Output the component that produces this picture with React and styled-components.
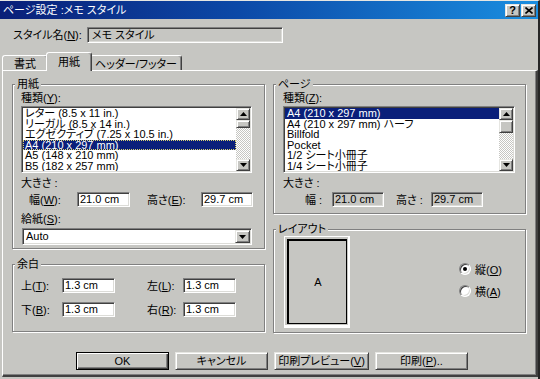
import React from 'react';
import styled, { createGlobalStyle, css } from 'styled-components';

const FACE = '#c6c6c2';

const GlobalStyle = createGlobalStyle`
  html, body { margin: 0; padding: 0; background: ${FACE}; }
  body {
    font-family: "Liberation Sans", "Noto Sans CJK JP", sans-serif;
    font-size: 11px;
    color: #000;
    font-feature-settings: "palt";
  }
  * { box-sizing: border-box; }
`;

const raised = css`
  border: 1px solid;
  border-color: #e6e6e2 #404040 #404040 #e6e6e2;
  box-shadow: inset 1px 1px 0 #fff, inset -1px -1px 0 #808080;
  background: ${FACE};
`;

const sunken = css`
  border: 1px solid;
  border-color: #808080 #fff #fff #808080;
  box-shadow: inset 1px 1px 0 #404040, inset -1px -1px 0 #dcdcd8;
`;

const Window = styled.div`
  width: 540px;
  height: 379px;
  background: ${FACE};
  border-top: 1px solid #e6e6e2;
  border-right: 2px solid #262626;
  padding-bottom: 2px;
  display: flex;
  flex-direction: column;
  overflow: hidden;
`;

const TitleBar = styled.div`
  height: 18px;
  flex: none;
  display: flex;
  align-items: center;
  padding: 0 2px 0 3px;
  background: linear-gradient(90deg, #0a1f78 0%, #0c4aa8 45%, #1a8ee0 100%);
  color: #fff;
  line-height: 18px;
  white-space: nowrap;
`;

const CaptionButtons = styled.div`
  margin-left: auto;
  display: flex;
  gap: 1px;
`;

const CaptionButton = styled.div`
  ${raised};
  width: 15px;
  height: 13px;
  display: flex;
  align-items: center;
  justify-content: center;
  font-weight: bold;
  font-size: 11px;
  line-height: 11px;
  color: #000;
`;

const StyleRow = styled.div`
  margin-top: 8px;
  height: 16px;
  flex: none;
  display: flex;
  align-items: center;
  padding-left: 13px;
`;

const Label = styled.div`
  width: ${(p) => (p.$w ? `${p.$w}px` : 'auto')};
  margin-left: ${(p) => p.$ml || 0}px;
  height: 14px;
  line-height: 14px;
  white-space: nowrap;
  flex: none;
`;

const U = styled.span`
  text-decoration: underline;
  text-underline-offset: 1px;
`;

const StyleInput = styled.div`
  ${sunken};
  width: 196px;
  height: 16px;
  background: ${FACE};
  padding-left: 4px;
  line-height: 14px;
  white-space: nowrap;
`;

const TabStrip = styled.div`
  margin-top: 9px;
  flex: none;
  display: flex;
  align-items: flex-end;
  padding-left: 2px;
  position: relative;
  z-index: 1;
`;

const Tab = styled.div`
  width: ${(p) => (p.$active ? p.$w + 4 : p.$w)}px;
  height: ${(p) => (p.$active ? 19 : 15)}px;
  margin: ${(p) => (p.$active ? '0 -2px -1px -2px' : '0')};
  position: relative;
  z-index: ${(p) => (p.$active ? 2 : 1)};
  background: ${FACE};
  border: 1px solid;
  border-bottom: none;
  border-color: #fff #404040 transparent #fff;
  border-radius: 3px 3px 0 0;
  box-shadow: inset -1px 0 0 #808080;
  display: flex;
  align-items: center;
  justify-content: center;
  padding-bottom: ${(p) => (p.$active ? 2 : 0)}px;
  white-space: nowrap;
`;

const Panel = styled.div`
  flex: 1;
  margin-left: 2px;
  border-style: solid;
  border-width: 1px 2px 2px 1px;
  border-color: #fff #404040 #404040 #fff;
  box-shadow: inset -1px -1px 0 #808080;
  padding: 13px 0 0 9px;
  display: flex;
  flex-direction: column;
`;

const Columns = styled.div`
  display: flex;
  gap: 8px;
  align-items: flex-start;
`;

const Column = styled.div`
  width: 253px;
  display: flex;
  flex-direction: column;
  gap: 15px;
`;

const Group = styled.div`
  position: relative;
  border: 1px solid #808080;
  box-shadow: inset 1px 1px 0 #fff, 1px 1px 0 #fff;
  padding: ${(p) => p.$pad};
  height: ${(p) => (p.$h ? `${p.$h}px` : 'auto')};
  display: flex;
  flex-direction: ${(p) => (p.$row ? 'row' : 'column')};
  align-items: flex-start;
`;

const Legend = styled.div`
  position: absolute;
  top: -8px;
  left: 2px;
  padding: 0 2px;
  background: ${FACE};
  line-height: 14px;
  white-space: nowrap;
`;

const ListBox = styled.div`
  ${sunken};
  width: ${(p) => p.$w}px;
  height: 67px;
  margin-top: 1px;
  background: #fff;
  padding: 1px;
  display: flex;
`;

const Items = styled.div`
  flex: 1;
  overflow: hidden;
  display: flex;
  flex-direction: column;
`;

const Item = styled.div`
  height: 10.5px;
  line-height: 10.5px;
  padding-left: 2px;
  white-space: nowrap;
  flex: none;
  background: ${(p) => (p.$selected ? '#0a1f7a' : 'transparent')};
  color: ${(p) => (p.$selected ? '#fff' : '#000')};
  outline: ${(p) => (p.$focus ? '1px dotted #d8d070' : 'none')};
  outline-offset: -1px;
`;

const ScrollBar = styled.div`
  width: 14px;
  flex: none;
  display: flex;
  flex-direction: column;
`;

const ScrollButton = styled.div`
  ${raised};
  height: ${(p) => p.$h}px;
  flex: none;
  display: flex;
  align-items: center;
  justify-content: center;
`;

const Track = styled.div`
  flex: 1;
  background: repeating-conic-gradient(#ffffff 0 25%, ${FACE} 0 50%) 0 0 / 2px 2px;
`;

const SectionLabel = styled(Label)`
  margin-top: ${(p) => p.$mt || 0}px;
`;

const FieldRow = styled.div`
  margin-top: ${(p) => p.$mt || 0}px;
  margin-left: ${(p) => p.$ml || 0}px;
  height: 15px;
  display: flex;
  align-items: center;
`;

const TextBox = styled.div`
  ${sunken};
  width: ${(p) => p.$w}px;
  height: 15px;
  flex: none;
  background: ${(p) => (p.$disabled ? FACE : '#fff')};
  padding-left: 2px;
  line-height: 13px;
  white-space: nowrap;
`;

const ComboBox = styled.div`
  ${sunken};
  width: 230px;
  height: 17px;
  margin-top: 2px;
  margin-left: 1px;
  background: #fff;
  padding: 1px;
  display: flex;
  align-items: center;
`;

const ComboText = styled.div`
  flex: 1;
  padding-left: 2px;
  line-height: 13px;
`;

const ComboArrow = styled.div`
  ${raised};
  width: 15px;
  height: 13px;
  display: flex;
  align-items: center;
  justify-content: center;
`;

const MarginGrid = styled.div`
  display: grid;
  grid-template-columns: 41px 53px 32px 36px 53px;
  row-gap: 9px;
  align-items: center;
`;

const PageFrame = styled.div`
  width: 66px;
  height: 92px;
  flex: none;
  border: 1px solid #fff;
  border-bottom-width: 3px;
  border-right-width: 2px;
  padding: 2px 1px 1px 2px;
  display: flex;
`;

const Sheet = styled.div`
  flex: 1;
  border: 1px solid #000;
  box-shadow: inset 1px 1px 0 #000;
  display: flex;
  align-items: center;
  justify-content: center;
  padding-left: 2px;
`;

const RadioGroup = styled.div`
  margin-left: 109px;
  margin-top: 26px;
  display: flex;
  flex-direction: column;
  gap: 8px;
`;

const RadioRow = styled.div`
  display: flex;
  align-items: center;
  height: 14px;
  gap: 4px;
  white-space: nowrap;
`;

const RadioCircle = styled.div`
  width: 12px;
  height: 12px;
  border-radius: 50%;
  border: 1px solid;
  border-color: #808080 #fff #fff #808080;
  box-shadow: inset 1px 1px 0 #404040, inset -1px -1px 0 #dcdcd8;
  background: #fff;
  display: flex;
  align-items: center;
  justify-content: center;
  &::after {
    content: '';
    width: 4px;
    height: 4px;
    border-radius: 50%;
    background: ${(p) => (p.$checked ? '#000' : 'transparent')};
  }
`;

const ButtonRow = styled.div`
  margin-top: 19px;
  padding-left: 64px;
  display: flex;
  gap: 6px;
`;

const PushButton = styled.div`
  ${raised};
  width: ${(p) => p.$w}px;
  height: 18px;
  display: flex;
  align-items: center;
  justify-content: center;
  white-space: nowrap;
  line-height: 14px;
  ${(p) =>
    p.$default &&
    css`
      border-color: #000;
      box-shadow: inset 1px 1px 0 #fff, inset -1px -1px 0 #404040, inset -2px -2px 0 #808080;
    `}
`;

const Up = () => (
  <svg width="7" height="4" viewBox="0 0 7 4">
    <polygon points="3.5,0 7,4 0,4" fill="#000" />
  </svg>
);

const Down = () => (
  <svg width="7" height="4" viewBox="0 0 7 4">
    <polygon points="0,0 7,0 3.5,4" fill="#000" />
  </svg>
);

const CloseGlyph = () => (
  <svg width="8" height="7" viewBox="0 0 8 7">
    <path d="M0.5 0.5 L7.5 6.5 M7.5 0.5 L0.5 6.5" stroke="#000" strokeWidth="1.6" />
  </svg>
);

const Scroll = ({ thumb }) => (
  <ScrollBar>
    <ScrollButton $h={12}><Up /></ScrollButton>
    <ScrollButton $h={thumb} />
    <Track />
    <ScrollButton $h={12}><Down /></ScrollButton>
  </ScrollBar>
);

const paperItems = [
  'レター (8.5 x 11 in.)',
  'リーガル (8.5 x 14 in.)',
  'エグゼクティブ (7.25 x 10.5 in.)',
  'A4 (210 x 297 mm)',
  'A5 (148 x 210 mm)',
  'B5 (182 x 257 mm)',
];

const pageItems = [
  'A4 (210 x 297 mm)',
  'A4 (210 x 297 mm) ハーフ',
  'Billfold',
  'Pocket',
  '1/2 シート小冊子',
  '1/4 シート小冊子',
];

export default function App() {
  return (
    <>
      <GlobalStyle />
      <Window>
        <TitleBar>
          ページ設定 :メモ スタイル
          <CaptionButtons>
            <CaptionButton>?</CaptionButton>
            <CaptionButton><CloseGlyph /></CaptionButton>
          </CaptionButtons>
        </TitleBar>

        <StyleRow>
          <Label $w={74}>スタイル名(<U>N</U>):</Label>
          <StyleInput>メモ スタイル</StyleInput>
        </StyleRow>

        <TabStrip>
          <Tab $w={46}>書式</Tab>
          <Tab $w={42} $active>用紙</Tab>
          <Tab $w={92}>ヘッダー/フッター</Tab>
        </TabStrip>

        <Panel>
          <Columns>
            <Column>
              <Group $pad="6px 0 3px 8px">
                <Legend>用紙</Legend>
                <SectionLabel>種類(<U>Y</U>):</SectionLabel>
                <ListBox $w={231}>
                  <Items>
                    {paperItems.map((t, i) => (
                      <Item key={t} $selected={i === 3} $focus={i === 3}>{t}</Item>
                    ))}
                  </Items>
                  <Scroll thumb={8} />
                </ListBox>
                <SectionLabel $mt={3}>大きさ :</SectionLabel>
                <FieldRow $mt={2} $ml={8}>
                  <Label $w={48}>幅(<U>W</U>):</Label>
                  <TextBox $w={53}>21.0 cm</TextBox>
                  <Label $w={54} $ml={17}>高さ(<U>E</U>):</Label>
                  <TextBox $w={52}>29.7 cm</TextBox>
                </FieldRow>
                <SectionLabel $mt={5}>給紙(<U>S</U>):</SectionLabel>
                <ComboBox>
                  <ComboText>Auto</ComboText>
                  <ComboArrow><Down /></ComboArrow>
                </ComboBox>
              </Group>

              <Group $pad="13px 0 14px 8px">
                <Legend>余白</Legend>
                <MarginGrid>
                  <Label>上(<U>T</U>):</Label>
                  <TextBox $w={53}>1.3 cm</TextBox>
                  <span />
                  <Label>左(<U>L</U>):</Label>
                  <TextBox $w={53}>1.3 cm</TextBox>
                  <Label>下(<U>B</U>):</Label>
                  <TextBox $w={53}>1.3 cm</TextBox>
                  <span />
                  <Label>右(<U>R</U>):</Label>
                  <TextBox $w={53}>1.3 cm</TextBox>
                </MarginGrid>
              </Group>
            </Column>

            <Column>
              <Group $pad="6px 0 6px 9px">
                <Legend>ページ</Legend>
                <SectionLabel>種類(<U>Z</U>):</SectionLabel>
                <ListBox $w={232}>
                  <Items>
                    {pageItems.map((t, i) => (
                      <Item key={t} $selected={i === 0}>{t}</Item>
                    ))}
                  </Items>
                  <Scroll thumb={13} />
                </ListBox>
                <SectionLabel $mt={3}>大きさ :</SectionLabel>
                <FieldRow $mt={2} $ml={22}>
                  <Label $w={27}>幅 :</Label>
                  <TextBox $w={52} $disabled>21.0 cm</TextBox>
                  <Label $w={35} $ml={12}>高さ :</Label>
                  <TextBox $w={52} $disabled>29.7 cm</TextBox>
                </FieldRow>
              </Group>

              <Group $pad="6px 0 0 10px" $h={104} $row>
                <Legend>レイアウト</Legend>
                <PageFrame>
                  <Sheet>A</Sheet>
                </PageFrame>
                <RadioGroup>
                  <RadioRow>
                    <RadioCircle $checked />
                    <span>縦(<U>O</U>)</span>
                  </RadioRow>
                  <RadioRow>
                    <RadioCircle />
                    <span>横(<U>A</U>)</span>
                  </RadioRow>
                </RadioGroup>
              </Group>
            </Column>
          </Columns>

          <ButtonRow>
            <PushButton $w={93} $default>OK</PushButton>
            <PushButton $w={93}>キャンセル</PushButton>
            <PushButton $w={95}>印刷プレビュー(<U>V</U>)</PushButton>
            <PushButton $w={93}>印刷(<U>P</U>)..</PushButton>
          </ButtonRow>
        </Panel>
      </Window>
    </>
  );
}
